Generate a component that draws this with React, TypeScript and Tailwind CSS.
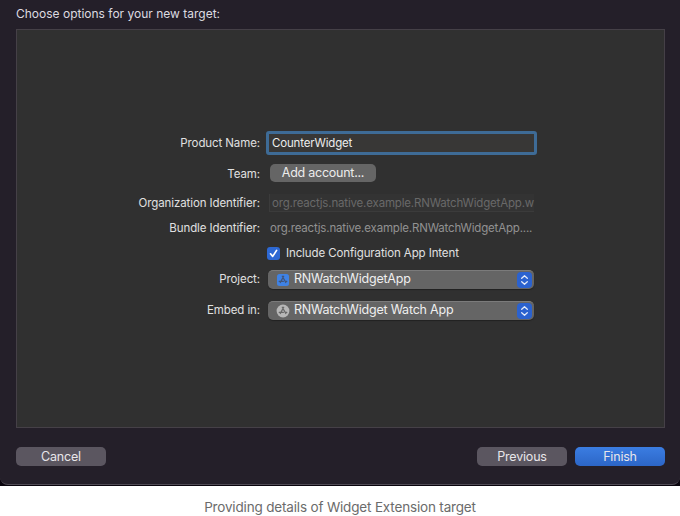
import type { ReactNode } from 'react';

function Row({ label, className, labelClass = 'pt-[1px]', children }: { label?: string; className: string; labelClass?: string; children: ReactNode }) {
  return (
    <div className={`flex items-center ${className}`}>
      <div className={`w-[243px] shrink-0 text-right text-[11.5px] tracking-[-0.1px] text-[#e0e0e0] ${labelClass}`}>{label}</div>
      {children}
    </div>
  );
}

function AppGlyph({ round }: { round?: boolean }) {
  return (
    <svg width="14" height="14" viewBox="0 0 14 14" fill="none" className="shrink-0">
      {round ? <circle cx="7" cy="7" r="6.4" fill="#b7b7b7" /> : <rect x="1" y="1" width="12" height="12" rx="2.5" fill="#3f82e4" />}
      <path d="M7.7 3.3 4.3 9.5M6.3 3.3l3.5 6.2M3.2 8.3h4.2M9.2 8.3h1.6" stroke={round ? '#686868' : '#41557a'} strokeWidth="1.3" strokeLinecap="round" />
    </svg>
  );
}

function Select({ icon, children }: { icon: ReactNode; children: ReactNode }) {
  return (
    <div className="ml-2 flex h-[19px] w-[266px] items-center rounded-[5px] border-t border-[#7b7b7b] bg-[#656565] pr-[2px] pl-2 shadow-[0_1px_1px_#222]">
      {icon}
      <span className="ml-1 grow pb-[1px] text-[12.5px] tracking-[-0.21px] text-[#efefef]">{children}</span>
      <span className="flex h-4 w-[15px] items-center justify-center rounded-[4px] bg-[#2b62cf]">
        <svg width="9" height="12" viewBox="0 0 9 12" fill="none" stroke="#e4ebfa" strokeWidth="1.3" strokeLinecap="round" strokeLinejoin="round">
          <path d="m1.7 4.2 2.8-2.5 2.8 2.5M1.7 7.8l2.8 2.5 2.8-2.5" />
        </svg>
      </span>
    </div>
  );
}

export default function App() {
  return (
    <div className="h-[516px] w-[680px] overflow-hidden bg-white font-['Inter',sans-serif] leading-none whitespace-nowrap">
      <div className="h-[486px] bg-[#09040d]">
        <div className="h-[485px] rounded-b-[8px] border-b border-[#514c56] bg-[#241f29] px-4">
          <div className="flex h-[29px] items-center pb-[2px] text-[12px] text-[#dddbe0]">
            <span>Choose options for your new target:</span>
          </div>
          <div className="h-[399px] w-[649px] border border-[#454047] bg-[#303030] pt-[101px]">
            <Row label="Product Name:" className="h-6">
              <div className="ml-1.5 flex h-6 w-[271px] items-center rounded-[3px] border-3 border-[#3e6b96] bg-[#383736] pt-[1px] pl-[3px] text-[11.5px] tracking-[-0.16px] text-[#ededed]">CounterWidget</div>
            </Row>
            <Row label="Team:" className="mt-[9px] h-[18px]" labelClass="pt-[3px]">
              <button className="ml-2.5 h-[18px] w-[106px] rounded-[5px] bg-[#656565] text-[12.5px] tracking-[-0.25px] text-[#ececec]">Add account...</button>
            </Row>
            <Row label="Organization Identifier:" className="mt-3 h-[18px]" labelClass="pt-[2px]">
              <div className="ml-[9px] flex h-[18px] w-[265px] items-center border-b border-l border-[#3b3b3b] bg-[#333333] pt-[2px] pl-[2px] text-[11.5px] tracking-[-0.17px] text-[#696969]">org.reactjs.native.example.RNWatchWidgetApp.w</div>
            </Row>
            <Row label="Bundle Identifier:" className="mt-[7px] h-[18px]" labelClass="pt-[2px]">
              <div className="ml-2.5 pt-[2px] text-[11.5px] tracking-[-0.17px] text-[#929292]">org.reactjs.native.example.RNWatchWidgetApp....</div>
            </Row>
            <Row className="mt-[7px] h-[18px]">
              <div className="ml-[7px] flex h-[13px] w-[13px] items-center justify-center rounded-[3px] bg-[#2d68d3]">
                <svg width="11" height="11" viewBox="0 0 11 11" fill="none" stroke="white" strokeWidth="1.7" strokeLinecap="round" strokeLinejoin="round"><path d="m2.5 5.8 2.2 2.6 3.9-6" /></svg>
              </div>
              <span className="ml-1.5 pt-[2px] text-[11.5px] tracking-[-0.11px] text-[#e0e0e0]">Include Configuration App Intent</span>
            </Row>
            <Row label="Project:" className="mt-2 h-[19px]">
              <Select icon={<AppGlyph />}>RNWatchWidgetApp</Select>
            </Row>
            <Row label="Embed in:" className="mt-3 h-[19px]">
              <Select icon={<AppGlyph round />}>RNWatchWidget Watch App</Select>
            </Row>
          </div>
          <div className="mt-[19px] flex w-[649px] text-[12.5px] tracking-[-0.2px] text-[#e8e6ea]">
            <button className="h-[19px] w-[90px] rounded-[5px] bg-[#5b5660] pt-[1px]">Cancel</button>
            <button className="ml-auto h-[19px] w-[90px] rounded-[5px] bg-[#5b5660] pt-[1px]">Previous</button>
            <button className="ml-2 h-[19px] w-[90px] rounded-[5px] bg-linear-to-b from-[#3b7de2] to-[#2c66c7] pt-[1px]">Finish</button>
          </div>
        </div>
      </div>
      <div className="flex h-[30px] items-center justify-center pt-[14px] text-[13.5px] tracking-[-0.17px] text-[#6b6b6b]"><span>Providing details of Widget Extension target</span></div>
    </div>
  );
}
